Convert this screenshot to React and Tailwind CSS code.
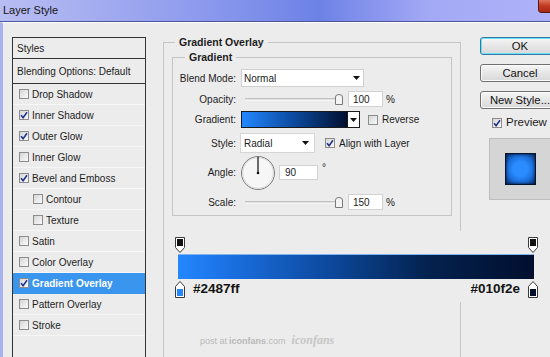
const rows = [
  { label: "Drop Shadow", checked: false },
  { label: "Inner Shadow", checked: true },
  { label: "Outer Glow", checked: true },
  { label: "Inner Glow", checked: false },
  { label: "Bevel and Emboss", checked: true },
  { label: "Contour", checked: false, indent: true },
  { label: "Texture", checked: false, indent: true },
  { label: "Satin", checked: false },
  { label: "Color Overlay", checked: false },
  { label: "Gradient Overlay", checked: true, active: true },
  { label: "Pattern Overlay", checked: false },
  { label: "Stroke", checked: false },
];

const Check = ({ checked }) => (
  <span className="flex h-[10px] w-[10px] shrink-0 items-center justify-center border border-[#8c8c8c] bg-[linear-gradient(135deg,#d6d6d6,#fafafa)]">
    {checked && (
      <svg width="8" height="8" viewBox="0 0 8 8">
        <path d="M1 4.2 L3.1 6.6 L7 1.2" fill="none" stroke="#22358c" strokeWidth="1.6" />
      </svg>
    )}
  </span>
);

const Arrow = () => (
  <svg width="7" height="4" viewBox="0 0 7 4">
    <path d="M0 0 H7 L3.5 4 Z" fill="#111" />
  </svg>
);

const Slider = () => (
  <svg width="102" height="16" viewBox="0 0 102 16" className="ml-[5px]">
    <line x1="4" y1="8" x2="96" y2="8" stroke="#9a9a9a" strokeWidth="1" />
    <line x1="4" y1="9" x2="96" y2="9" stroke="#ffffff" strokeWidth="1" />
    <path d="M94.5 13.5 V6 Q94.5 3.5 98 3.5 Q101.5 3.5 101.5 6 V13.5 Z" fill="#f4f4f4" stroke="#7a7a7a" />
  </svg>
);

const Field = ({ value, w }) => (
  <div className={`flex h-[16px] items-center border border-[#d2d2d2] bg-white pl-[4px] ${w}`}>
    {value}
  </div>
);

const Button = ({ children, primary }) => (
  <div
    className={`flex h-[18px] w-[80px] items-center justify-center rounded-[3px] border bg-[linear-gradient(#f6f6f6,#e6e6e6_50%,#d8d8d8)] text-[11.25px] text-[#111] ${
      primary
        ? "border-[#2f7aa6] shadow-[inset_0_0_0_1px_#6fe0f6]"
        : "border-[#707070] shadow-[inset_0_0_0_1px_#fbfbfb]"
    }`}
  >
    {children}
  </div>
);

const OpacityStop = () => (
  <svg width="10" height="16" viewBox="0 0 10 16">
    <path d="M0.5 0.5 H9.5 V10.5 L5 15.5 L0.5 10.5 Z" fill="#fff" stroke="#3a3a3a" />
    <rect x="2" y="2" width="6" height="7" fill="#111" />
  </svg>
);

const ColorStop = ({ color }) => (
  <svg width="10" height="17" viewBox="0 0 10 17">
    <path d="M5 0.5 L9.5 5.5 V16.5 H0.5 V5.5 Z" fill="#fff" stroke="#3a3a3a" />
    <rect x="2" y="8" width="6" height="7" fill={color} />
  </svg>
);

export default function App() {
  return (
    <div className="relative h-[357px] w-[550px] overflow-hidden bg-[#ececec] font-['Liberation_Sans',Arial,sans-serif] text-[10px] text-[#1c1c1c]">
      <div className="relative flex h-[22px] items-center border-b border-[#4d5794] bg-[linear-gradient(to_right,#b8bdf2,#8f9cee_35%,#6d82e6_58%,#a3a9f5_78%,#aeb2f8)] pl-[3px] text-[11px] text-[#151515]">
        Layer Style
        <div className="absolute -top-[3px] left-[538px] h-[16px] w-[30px] rounded-[3px] border border-[#5b1a10] bg-[linear-gradient(#e88a72,#c23a22_55%,#a52a18)]" />
      </div>

      <div className="flex h-[335px] border-l-[3px] border-t border-l-[#a8b2ee] border-t-white pl-[9px]">
        {/* styles list */}
        <div className="mt-[14px] h-[330px] w-[134px] shrink-0 border-x border-[#333]">
          <div className="flex h-[22px] items-center border-y border-[#333] pl-[4px]">Styles</div>
          <div className="flex h-[25px] items-center border-b border-[#333] pl-[4px]">Blending Options: Default</div>
          {rows.map((r) => (
            <div
              key={r.label}
              className={`flex h-[21px] items-center gap-[3px] border-b ${
                r.active ? "border-[#3a95ee] bg-[#3a95ee] font-bold text-white" : "border-[#f6f6f6]"
              } ${r.indent ? "pl-[20px]" : "pl-[6px]"}`}
            >
              <Check checked={r.checked} />
              <span>{r.label}</span>
            </div>
          ))}
        </div>

        {/* settings */}
        <fieldset className="ml-[17px] mt-[12px] h-[330px] w-[298px] shrink-0 border border-[#c4c4c4] px-[8px]">
          <legend className="ml-[3px] px-[4px] text-[10.5px] font-bold leading-[14px]">Gradient Overlay</legend>
          <fieldset className="mt-[1px] w-[280px] border border-[#c4c4c4] pb-[5px] pt-[5px]">
            <legend className="ml-[12px] px-[4px] text-[10.5px] font-bold leading-[14px]">Gradient</legend>

            <div className="flex h-[18px] items-center">
              <span className="w-[63px] text-right">Blend Mode:</span>
              <div className="ml-[5px] flex h-[18px] w-[123px] items-center justify-between border border-[#cfcfcf] bg-white pl-[2px] pr-[3px]">
                Normal
                <Arrow />
              </div>
            </div>

            <div className="mt-[4px] flex h-[16px] items-center">
              <span className="w-[63px] text-right">Opacity:</span>
              <Slider />
              <div className="ml-[5px]">
                <Field value="100" w="w-[35px]" />
              </div>
              <span className="ml-[3px]">%</span>
            </div>

            <div className="mt-[4px] flex h-[17px] items-center">
              <span className="w-[63px] text-right">Gradient:</span>
              <div className="ml-[5px] flex h-[17px] w-[119px] border border-[#1a1a1a]">
                <div className="flex-1 bg-[linear-gradient(to_right,#2487ff,#0d4fa8_45%,#010f2e)]" />
                <div className="flex w-[12px] items-center justify-center border-l border-[#1a1a1a] bg-white">
                  <Arrow />
                </div>
              </div>
              <div className="ml-[8px]">
                <Check checked={false} />
              </div>
              <span className="ml-[4px]">Reverse</span>
            </div>

            <div className="mt-[5px] flex h-[20px] items-center">
              <span className="w-[63px] text-right">Style:</span>
              <div className="ml-[4px] flex h-[20px] w-[75px] items-center justify-between border border-[#d6d6d6] bg-white pl-[3px] pr-[5px]">
                Radial
                <Arrow />
              </div>
              <div className="ml-[10px]">
                <Check checked />
              </div>
              <span className="ml-[4px]">Align with Layer</span>
            </div>

            <div className="mt-[2px] flex h-[35px] items-center">
              <span className="w-[63px] text-right">Angle:</span>
              <svg width="36" height="36" viewBox="0 0 36 36" className="ml-[4px]">
                <circle cx="18" cy="18" r="16.5" fill="#f6f6f6" stroke="#7c7c7c" />
                <circle cx="18" cy="18" r="15.5" fill="none" stroke="#d8d8d8" />
                <line x1="18" y1="18" x2="18" y2="2" stroke="#111" strokeWidth="1.2" />
                <circle cx="18" cy="18" r="1.3" fill="#111" />
              </svg>
              <div className="ml-[3px] flex h-[15px] w-[39px] items-center border border-[#d2d2d2] bg-white pl-[5px]">90</div>
              <span className="ml-[4px] -mt-[10px]">°</span>
            </div>

            <div className="mt-[4px] flex h-[16px] items-center">
              <span className="w-[63px] text-right">Scale:</span>
              <Slider />
              <div className="ml-[5px]">
                <Field value="150" w="w-[35px]" />
              </div>
              <span className="ml-[3px]">%</span>
            </div>
          </fieldset>
        </fieldset>

        {/* buttons */}
        <div className="ml-[19px] mt-[14px] flex w-[84px] shrink-0 flex-col">
          <Button primary>OK</Button>
          <div className="mt-[9px]">
            <Button>Cancel</Button>
          </div>
          <div className="mt-[9px]">
            <Button>New Style...</Button>
          </div>
          <div className="mt-[8px] flex h-[12px] items-center pl-[12px] text-[11.5px]">
            <Check checked />
            <span className="ml-[4px]">Preview</span>
          </div>
          <div className="ml-[9px] mt-[9px] h-[62px] w-[70px] border border-[#bdbdbd] bg-[#d5d5d5] pl-[15px] pt-[14px]">
            <div className="h-[32px] w-[31px] border border-[#06152f] bg-[radial-gradient(circle,#2a8cff_35%,#1a6bd6_65%,#0a2d66)] shadow-[inset_0_0_3px_#03122c]" />
          </div>
        </div>
      </div>

      {/* gradient editor strip */}
      <div className="absolute left-[165px] top-[231px] h-[71px] w-[385px] bg-[#ececec]">
        <div className="ml-[10px] mt-[6px] flex h-[16px] w-[363px] justify-between">
          <OpacityStop />
          <OpacityStop />
        </div>
        <div className="ml-[13px] mt-[1px] h-[25px] w-[356px] border-t border-[#7fb4ee] bg-[linear-gradient(to_right,#2487ff,#1a6fe0_15%,#0b4596_45%,#04224f_70%,#010f2e)]" />
        <div className="ml-[10px] mt-[2px] flex h-[17px] w-[363px] items-center text-[13.5px] font-bold text-[#151515]">
          <ColorStop color="#2487ff" />
          <span className="ml-[8px]">#2487ff</span>
          <span className="ml-auto mr-[8px]">#010f2e</span>
          <ColorStop color="#010f2e" />
        </div>
      </div>

      <div className="absolute left-[200px] top-[331px] flex items-baseline text-[9px] text-[#b8b8b8]">
        <span>post at </span>
        <span className="ml-[2px] font-bold">iconfans</span>
        <span>.com</span>
        <span className="ml-[6px] font-['Liberation_Serif',serif] text-[12px] font-bold italic text-[#c6c6c6]">iconfans</span>
      </div>
    </div>
  );
}
